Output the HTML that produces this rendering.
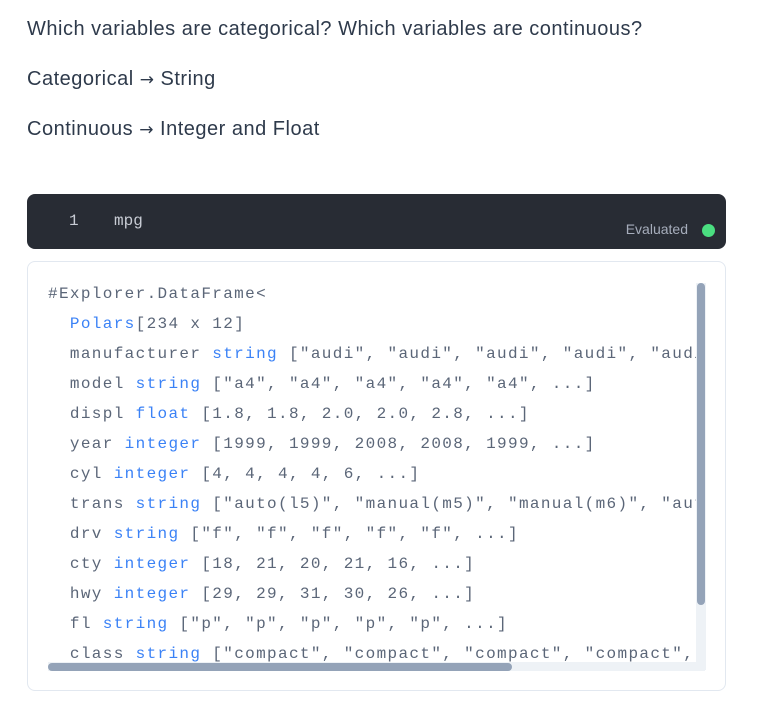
<!DOCTYPE html>
<html><head><meta charset="utf-8"><style>
body{margin:0;background:#fff;width:769px;height:711px;overflow:hidden;font-family:"Liberation Sans",sans-serif;}
p{position:absolute;left:27px;margin:0;font-size:20px;letter-spacing:0.5px;color:#2e3a4b;white-space:nowrap;}
.ar{font-family:"DejaVu Sans",sans-serif;font-size:17px;}
.cell{position:absolute;left:27px;top:194px;width:699px;height:55px;background:#282c34;border-radius:8px;}
.mono{font-family:"Liberation Mono",monospace;}
.ln{position:absolute;left:42px;top:18px;color:#c8ccd4;font-size:16px;}
.code{position:absolute;left:87px;top:18px;color:#c8ccd4;font-size:16px;}
.ev{position:absolute;right:38px;top:27px;font-size:14px;color:#a6adbb;}
.dot{position:absolute;right:11px;top:30px;width:13px;height:13px;border-radius:50%;background:#4ade80;}
.out{position:absolute;left:27px;top:261px;width:697px;height:428px;border:1px solid #e2e8f0;border-radius:8px;}
.lines{position:absolute;left:48px;top:283px;width:657px;height:387px;overflow:hidden;}
.l{height:30px;line-height:22px;font-size:16px;letter-spacing:1.35px;color:#5b6678;white-space:pre;}
.k{color:#3b82f6}
.vt{position:absolute;left:696px;top:283px;width:10px;height:387px;background:#eef2f6;}
.vth{position:absolute;left:697px;top:283px;width:8px;height:322px;background:#94a3b8;border-radius:4px;}
.ht{position:absolute;left:48px;top:662px;width:657px;height:9px;background:#eef2f6;}
.hth{position:absolute;left:48px;top:663px;width:464px;height:8px;background:#94a3b8;border-radius:4px;}
</style></head><body>
<p style="top:18px">Which variables are categorical? Which variables are continuous?</p>
<p style="top:68px">Categorical <span class="ar">→</span> String</p>
<p style="top:118px">Continuous <span class="ar">→</span> Integer and Float</p>
<div class="cell"><span class="ln mono">1</span><span class="code mono">mpg</span><span class="ev">Evaluated</span><span class="dot"></span></div>
<div class="out"></div>
<div class="lines mono">
<div class="l">#Explorer.DataFrame&lt;</div>
<div class="l">  <span class="k">Polars</span>[234 x 12]</div>
<div class="l">  manufacturer <span class="k">string</span> ["audi", "audi", "audi", "audi", "audi", ...]</div>
<div class="l">  model <span class="k">string</span> ["a4", "a4", "a4", "a4", "a4", ...]</div>
<div class="l">  displ <span class="k">float</span> [1.8, 1.8, 2.0, 2.0, 2.8, ...]</div>
<div class="l">  year <span class="k">integer</span> [1999, 1999, 2008, 2008, 1999, ...]</div>
<div class="l">  cyl <span class="k">integer</span> [4, 4, 4, 4, 6, ...]</div>
<div class="l">  trans <span class="k">string</span> ["auto(l5)", "manual(m5)", "manual(m6)", "auto(av)", ...]</div>
<div class="l">  drv <span class="k">string</span> ["f", "f", "f", "f", "f", ...]</div>
<div class="l">  cty <span class="k">integer</span> [18, 21, 20, 21, 16, ...]</div>
<div class="l">  hwy <span class="k">integer</span> [29, 29, 31, 30, 26, ...]</div>
<div class="l">  fl <span class="k">string</span> ["p", "p", "p", "p", "p", ...]</div>
<div class="l">  class <span class="k">string</span> ["compact", "compact", "compact", "compact", ...]</div>
</div>
<div class="vt"></div><div class="vth"></div>
<div class="ht"></div><div class="hth"></div>
</body></html>
